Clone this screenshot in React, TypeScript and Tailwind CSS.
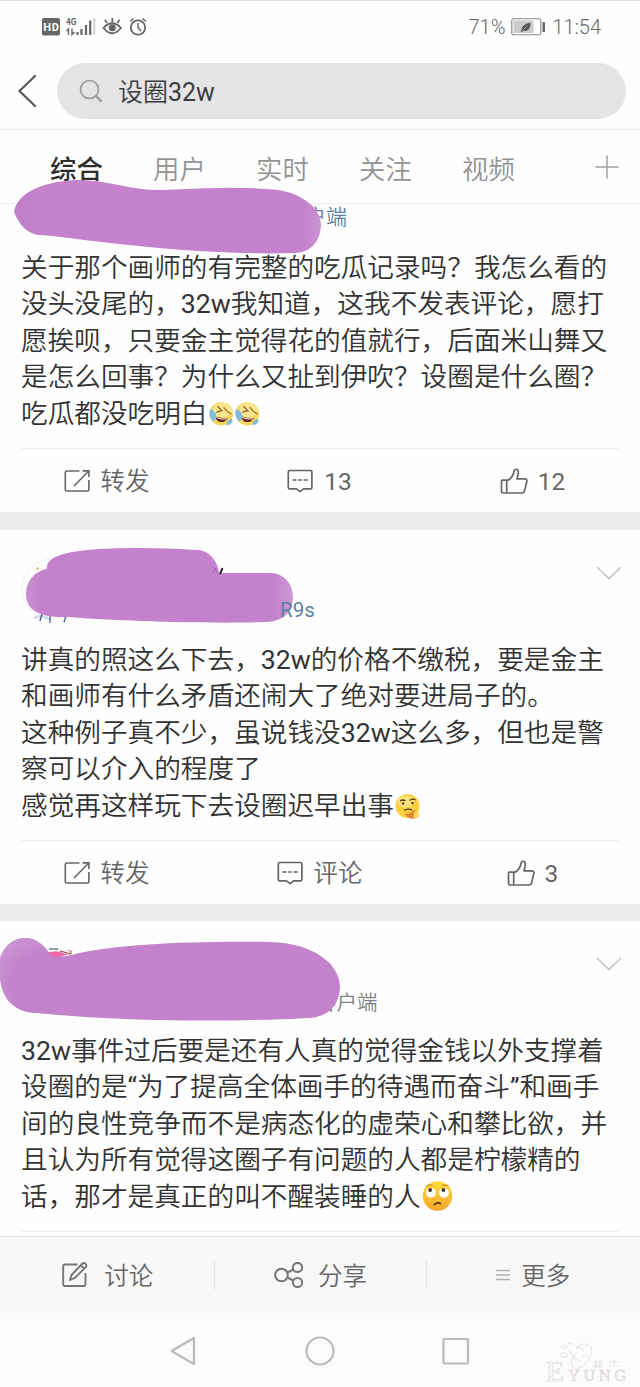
import type { ReactNode } from 'react'

interface Line {
  text: string
  emoji?: ReactNode
}

interface PostProps {
  header: ReactNode
  lines: Line[]
  children?: ReactNode
}

function BackIcon() {
  return (
    <svg className="h-[36px] w-[22px]" viewBox="0 0 22 36" fill="none" stroke="#5a5a5c" strokeWidth="2.2" strokeLinecap="round">
      <path d="M18 3 L2.5 18 L18 33" />
    </svg>
  )
}

function SearchIcon() {
  return (
    <svg className="h-6 w-6" viewBox="0 0 24 24" fill="none" stroke="#98989a" strokeWidth="1.6" strokeLinecap="round">
      <circle cx="10.5" cy="10.5" r="9" />
      <path d="M17 17 L22 22" strokeWidth="2.2" />
    </svg>
  )
}

function ForwardIcon() {
  return (
    <svg className="h-[24px] w-[26px]" viewBox="0 0 26 24" fill="none" stroke="#666" strokeWidth="1.6">
      <path d="M15.5 2 H2.7 Q1.3 2 1.3 3.4 V20.6 Q1.3 22 2.7 22 H23.5 Q24.9 22 24.9 20.6 V11" />
      <path d="M10 17 L24.5 2.3 M18.5 1.9 H24.9 V8" />
    </svg>
  )
}

function CommentIcon() {
  return (
    <svg className="h-[24px] w-[26px]" viewBox="0 0 26 24" fill="none" stroke="#666" strokeWidth="1.7" strokeLinejoin="round">
      <path d="M2.7 1.5 H23.5 Q24.9 1.5 24.9 2.9 V18.5 Q24.9 19.9 23.5 19.9 H16.5 L13 22.7 L9.5 19.9 H2.7 Q1.3 19.9 1.3 18.5 V2.9 Q1.3 1.5 2.7 1.5 Z" />
      <path d="M5.5 11 H9.5 M11.2 11 H14.8 M16.6 11 H20.7" />
    </svg>
  )
}

function LikeIcon() {
  return (
    <svg className="h-[28px] w-[28px]" viewBox="0 0 28 28" fill="none" stroke="#666" strokeWidth="1.7" strokeLinejoin="round">
      <path d="M2.3 13.2 H8 C11.5 11.5 13.3 8 14.2 4 C14.5 1.6 18 1.6 18.3 4.5 C18.5 7 17.6 9.5 17 11.8 H24.5 Q27.3 12 26.9 14.3 L24.5 24 Q24 26 22 26 H3 Q1.5 26 1.5 24.5 V14 Q1.5 13.2 2.3 13.2 Z" />
      <path d="M6.7 13.2 V26" />
    </svg>
  )
}

function ChevronDown() {
  return (
    <svg className="h-[16px] w-[26px]" viewBox="0 0 26 16" fill="none" stroke="#c6c6c6" strokeWidth="1.7">
      <path d="M1 2 L13 13.5 L25 2" />
    </svg>
  )
}

function LaughCryEmoji() {
  return (
    <svg className="h-[26px] w-[26.6px] shrink-0" viewBox="0 0 27 26">
      <ellipse cx="13.5" cy="12.8" rx="12" ry="11.8" fill="#f6d65b" />
      <ellipse cx="15" cy="9" rx="9.5" ry="7.5" fill="#fae68c" />
      <path d="M9.5 5 L14 9.5 L8.5 11" fill="none" stroke="#8b5a22" strokeWidth="1.3" />
      <path d="M16 6 Q19 11 24 13" fill="none" stroke="#a8742c" strokeWidth="1.3" />
      <path d="M7 15.5 Q14 17.5 20.5 17 Q16 23 10.5 20.5 Q7.5 18.5 7 15.5 Z" fill="#6e1d14" />
      <path d="M8 16 Q14 18 19.5 17.4 L18.5 18.5 Q13 19 8.5 17 Z" fill="#fff" />
      <path d="M2 8 Q9 10.5 8.5 16 Q7.5 21 4.5 20 Q0 15 2 8 Z" fill="#7dbde0" />
      <path d="M20 20 Q25 16 25 20 Q23.5 24.5 18.5 24 Z" fill="#7dbde0" />
    </svg>
  )
}

function ThinkingEmoji() {
  return (
    <svg className="h-[27px] w-[27px] shrink-0" viewBox="0 0 27 27">
      <circle cx="13.5" cy="13" r="12" fill="#f8cf3f" />
      <ellipse cx="12" cy="8.5" rx="8.5" ry="6" fill="#fbe27a" />
      <path d="M6 8 Q9 6 11.5 8 M15.5 7.5 Q18.5 5 21.5 7" fill="none" stroke="#5a3a14" strokeWidth="1.3" />
      <circle cx="9" cy="10.5" r="1.2" fill="#4d3212" />
      <circle cx="18.5" cy="10" r="1.2" fill="#4d3212" />
      <path d="M10 17.5 Q13.5 15 18 17" fill="none" stroke="#5a3a14" strokeWidth="1.4" />
      <path d="M11 20 Q15 22.5 20.5 16.5 Q22 18 19.5 20.5 Q25 18.5 25 22.5 Q23 26.5 17 25.5 Q12 24.5 11 20 Z" fill="#e5872a" />
      <path d="M20 20.5 Q25 18.5 25.5 22 Q24 26 19 25 Z" fill="#fbdc62" />
    </svg>
  )
}

function RollingEyesEmoji() {
  return (
    <svg className="ml-[1px] mt-[-3px] h-[30px] w-[31px] shrink-0" viewBox="0 0 31 30">
      <defs>
        <linearGradient id="face" x1="0" y1="0" x2="0" y2="1">
          <stop offset="0" stopColor="#fddc3a" />
          <stop offset="1" stopColor="#f4a72a" />
        </linearGradient>
      </defs>
      <circle cx="15.5" cy="15" r="14.7" fill="url(#face)" />
      <circle cx="9" cy="11.8" r="4.9" fill="#fff" />
      <circle cx="22" cy="11.8" r="4.9" fill="#fff" />
      <circle cx="8.2" cy="9" r="1.9" fill="#43322a" />
      <circle cx="21.4" cy="9" r="1.9" fill="#43322a" />
      <path d="M4 5.5 Q7 3 10.5 4 M20.5 4 Q24 3 27 5.5" fill="none" stroke="#c97d1b" strokeWidth="1" />
      <path d="M12.5 23.5 Q15 21 18.5 22.5" fill="none" stroke="#5f3514" strokeWidth="1.8" strokeLinecap="round" />
    </svg>
  )
}

function StatusBar() {
  return (
    <div className="flex h-[54px] items-center border-t border-[#e2e2e2] pb-[2px] pl-[42px] pr-[39px] text-[20px] font-[350] text-[#666]">
      <svg className="h-[20px] w-[106px]" viewBox="42 17 106 20" fill="none" stroke="#666" strokeWidth="1.8">
        <rect x="42" y="18" width="18" height="17.5" rx="2" fill="#666" stroke="none" />
        <text x="43.3" y="31" fontSize="11" fontWeight="700" fontFamily="Roboto" fill="#fff" stroke="none" textLength="15.5">HD</text>
        <text x="66" y="25" fontSize="9.5" fontWeight="700" fontFamily="Roboto" fill="#666" stroke="none" textLength="10.5" lengthAdjust="spacingAndGlyphs">4G</text>
        <path d="M68.5 35 V29 L66.5 31 M72 28.5 V34.5 L74.5 32" strokeWidth="1.4" />
        <path d="M77.5 32 V35 M81.5 29 V35 M86 25 V35 M90.2 20.5 V35" strokeWidth="2.2" />
        <path d="M94.3 18 V35" strokeWidth="2" stroke="#d4d4d4" />
        <path d="M103.5 28 Q112 18.5 121 28 Q112 38.5 103.5 28 Z" />
        <circle cx="112.3" cy="27.7" r="3.5" fill="#666" stroke="none" />
        <path d="M112.3 18 V22 M105 19.8 L107 23 M119.5 19.8 L117.5 23" />
        <circle cx="138" cy="27.5" r="7.2" />
        <path d="M138 23 V27.5 L141 31 M130 21.5 L133.5 18.5 M146 21.5 L142.5 18.5" strokeWidth="1.5" />
      </svg>
      <span className="ml-auto">71%</span>
      <svg className="ml-[6px] mr-[6px] h-[18px] w-[35px]" viewBox="0 0 35 18">
        <rect x="0.8" y="0.8" width="29" height="16" rx="1.8" fill="#fff" stroke="#888" strokeWidth="1.1" />
        <rect x="2.5" y="2.5" width="20" height="12.5" fill="#ccc" />
        <rect x="31.5" y="4" width="2.5" height="10" rx="0.8" fill="#666" />
        <path d="M10 14 Q10 6 19.5 4.5 Q20 13.5 12 13 L10.5 14.5 Z" fill="#555" />
        <path d="M11.5 12.5 L16.5 7.5" stroke="#ccc" strokeWidth="0.6" />
      </svg>
      <span>11:54</span>
    </div>
  )
}

function SearchHeader() {
  return (
    <div className="flex h-[76px] items-start border-b border-[#e8e8e8] pl-[17px] pt-[9px]">
      <div className="flex h-[56px] w-[40px] items-center">
        <BackIcon />
      </div>
      <div className="flex h-[56px] w-[569px] items-center rounded-full bg-[#e4e4e6] pl-[22px]">
        <SearchIcon />
        <span className="ml-[15px] pt-[3px] text-[25px] text-[#3c3c3e]">设圈32w</span>
      </div>
    </div>
  )
}

const tabs = ['综合', '用户', '实时', '关注', '视频']

function Tabs() {
  return (
    <div className="flex h-[74px] items-center border-b border-[#f0f0f0] pl-[50px] text-[26.4px] text-[#939393]">
      {tabs.map((tab, i) => (
        <span
          key={tab}
          className={
            i === 0
              ? "w-[103px] pt-[7px] font-[Roboto,'Noto_Sans_CJK_SC',sans-serif] font-medium leading-[40px] text-[#2e2e2e]"
              : 'w-[103px] pt-[7px] leading-[40px]'
          }
        >
          {tab}
        </span>
      ))}
      <svg className="ml-[29px] h-[26px] w-[26px]" viewBox="0 0 26 26" stroke="#a0a0a0" strokeWidth="1.5">
        <path d="M1.5 13 H24.5 M13 1.5 V24.5" />
      </svg>
    </div>
  )
}

function Post({ header, lines, children }: PostProps) {
  return (
    <article>
      {header}
      <div className="h-[199px] px-[21px]">
        <div className="h-full border-b border-[#ececec] text-[26.65px] text-[#333]">
          {lines.map((line) => (
            <p key={line.text} className="flex h-[36.4px] items-center whitespace-nowrap leading-[36.4px] last:pt-[1px]">
              {line.text}
              {line.emoji}
            </p>
          ))}
        </div>
      </div>
      {children}
    </article>
  )
}

function Actions({ comments, likes }: { comments: string; likes: string }) {
  return (
    <div className="flex h-[63px] items-center pr-[1px] text-[24.5px] text-[#666]">
      <div className="flex flex-1 items-center justify-center gap-[11px]">
        <ForwardIcon />
        <span className="pt-[3px]">转发</span>
      </div>
      <div className="flex flex-1 items-center justify-center gap-[11px]">
        <CommentIcon />
        <span className="pt-[3px]">{comments}</span>
      </div>
      <div className="flex flex-1 items-center justify-center gap-[10px]">
        <LikeIcon />
        <span className="pt-[3px]">{likes}</span>
      </div>
    </div>
  )
}

const firstLines: Line[] = [
  { text: '关于那个画师的有完整的吃瓜记录吗？我怎么看的' },
  { text: '没头没尾的，32w我知道，这我不发表评论，愿打' },
  { text: '愿挨呗，只要金主觉得花的值就行，后面米山舞又' },
  { text: '是怎么回事？为什么又扯到伊吹？设圈是什么圈？' },
  { text: '吃瓜都没吃明白', emoji: <><LaughCryEmoji /><LaughCryEmoji /></> },
]

const secondLines: Line[] = [
  { text: '讲真的照这么下去，32w的价格不缴税，要是金主' },
  { text: '和画师有什么矛盾还闹大了绝对要进局子的。' },
  { text: '这种例子真不少，虽说钱没32w这么多，但也是警' },
  { text: '察可以介入的程度了' },
  { text: '感觉再这样玩下去设圈迟早出事', emoji: <ThinkingEmoji /> },
]

const thirdLines: Line[] = [
  { text: '32w事件过后要是还有人真的觉得金钱以外支撑着' },
  { text: '设圈的是“为了提高全体画手的待遇而奋斗”和画手' },
  { text: '间的良性竞争而不是病态化的虚荣心和攀比欲，并' },
  { text: '且认为所有觉得这圈子有问题的人都是柠檬精的' },
  { text: '话，那才是真正的叫不醒装睡的人', emoji: <RollingEyesEmoji /> },
]

function FirstHeader() {
  return (
    <div className="relative h-[46px] pl-[305px] pt-[1px]">
      <span className="block text-[21px] leading-[24px] text-[#5c7fa3]">户端</span>
      <svg className="absolute left-0 top-[-30px] h-[80px] w-[340px]" viewBox="0 174 340 80">
        <defs>
          <linearGradient id="brush-a" x1="0" y1="0" x2="1" y2="0">
            <stop offset="0" stopColor="#bf80c8" />
            <stop offset="0.07" stopColor="#c382cb" />
            <stop offset="0.94" stopColor="#c382cb" />
            <stop offset="1" stopColor="#cc92d5" />
          </linearGradient>
        </defs>
        <path
          d="M14 212 C18 190 48 181 78 180 C108 180 133 191 163 190 C205 188 242 186 278 190 C300 193 321 207 321 225 C320 243 310 253 293 253 C232 255 163 249 110 243 C82 240 59 236 38 235 C27 233 20 226 14 212 Z"
          fill="url(#brush-a)"
        />
      </svg>
    </div>
  )
}

function SecondHeader() {
  return (
    <div className="relative flex h-[112px] justify-between pl-[280px] pr-[18px]">
      <span className="relative z-10 pt-[68px] text-[20.5px] leading-[24px] text-[#5c7fa3]">R9s</span>
      <div className="pt-[35px]">
        <ChevronDown />
      </div>
      <svg className="absolute left-0 top-0 h-[100px] w-[310px]" viewBox="0 530 310 100">
        <defs>
          <linearGradient id="brush-b" x1="0" y1="0" x2="1" y2="0">
            <stop offset="0" stopColor="#ca8dd2" />
            <stop offset="0.06" stopColor="#c382cb" />
            <stop offset="0.93" stopColor="#c382cb" />
            <stop offset="1" stopColor="#cf9ad7" />
          </linearGradient>
        </defs>
        <circle cx="52" cy="589" r="30" fill="#fff" stroke="#efeff4" />
        <circle cx="37.5" cy="568.5" r="1.2" fill="#e8a660" />
        <path d="M34 618 Q42 614 49 619" stroke="#d5d9ef" strokeWidth="3" fill="none" />
        <path d="M42 614 L40 621 M50 614 V623 M66 616 L64 622" stroke="#54628e" strokeWidth="1.4" />
        <path
          d="M47 569 C45 554 75 551 98 549 C132 547 168 548 198 550 C210 551 218 562 219 573 H270 C285 573 293 585 293 597 C293 613 282 622 265 622 C210 624 120 621 68 617 C42 618 26 612 26 594 C26 581 35 571 47 569 Z"
          fill="url(#brush-b)"
        />
        <path d="M222.5 568 L220 574" stroke="#2e2638" strokeWidth="2" />
        <path d="M213 573 L215 568 L217 573" stroke="#a167ae" fill="none" />
      </svg>
    </div>
  )
}

function ThirdHeader() {
  return (
    <div className="relative flex h-[112px] justify-between pl-[316px] pr-[18px]">
      <span className="pt-[70px] text-[20.5px] leading-[24px] text-[#808080]">客户端</span>
      <div className="pt-[35px]">
        <ChevronDown />
      </div>
      <svg className="absolute left-0 top-0 h-[106px] w-[345px]" viewBox="0 921 345 106">
        <defs>
          <radialGradient id="brush-c" gradientUnits="userSpaceOnUse" cx="42" cy="985" r="50">
            <stop offset="0.6" stopColor="#c382cb" />
            <stop offset="1" stopColor="#cb93d3" />
          </radialGradient>
        </defs>
        <path
          d="M0 958 C5 944 15 938 25 938 C35 938 43 944 49 953 C56 957 64 957 71 955 C116 944 190 941 270 942 C315 943 340 965 340 987 C339 1008 325 1018 307 1018 C240 1022 120 1022 38 1013 C14 1013 1 998 0 976 Z"
          fill="#c382cb"
        />
        <path d="M0 958 C5 944 15 938 25 938 C35 938 43 944 49 953 V1014 L38 1013 C14 1013 1 998 0 976 Z" fill="url(#brush-c)" />
        <path d="M48 952 L54 958 L70 954 L71 950 Z" fill="#ed6ba6" />
        <path d="M49 949 Q59 947 70 951 L70 955 L60 952 Z" fill="#f4efee" />
        <path d="M49 949 H58" stroke="#61858c" strokeWidth="1.5" />
        <path d="M60 951 L71 954 V951" stroke="#984c4e" strokeWidth="1" fill="none" />
      </svg>
    </div>
  )
}

function Toolbar() {
  return (
    <div className="flex h-[77px] items-center border-t border-[#e3e3e3] bg-[#f8f8f8] pr-[1px] text-[24.5px] text-[#666]">
      <div className="flex h-[30px] flex-1 items-center justify-center gap-[16px] border-r border-[#e3e3e3] pl-[2px]">
        <svg className="h-[26px] w-[26px]" viewBox="0 0 26 26" fill="none" stroke="#757575" strokeWidth="1.9" strokeLinejoin="round">
          <path d="M15.5 2.5 H2.5 Q1.2 2.5 1.2 4 V22.5 Q1.2 24 2.5 24 H22 Q23.5 24 23.5 22.5 V11" />
          <path d="M8 18 L9.5 13 L20.5 1.5 Q22 0.5 23.5 1.8 Q25 3.3 24 4.8 L13 15.8 Z M19 3.5 L22 6.5" />
        </svg>
        <span className="pt-[4px]">讨论</span>
      </div>
      <div className="flex h-[30px] flex-1 items-center justify-center gap-[14px] border-r border-[#e3e3e3]">
        <svg className="h-[26px] w-[30px]" viewBox="0 0 30 26" fill="none" stroke="#757575" strokeWidth="2">
          <circle cx="7.5" cy="13" r="6.3" />
          <circle cx="23.5" cy="5.5" r="4.6" />
          <circle cx="23.5" cy="20.5" r="4.6" />
          <path d="M13.5 10.5 L19.3 7.5 M13.5 15.5 L19.3 18.5" />
        </svg>
        <span className="pt-[4px]">分享</span>
      </div>
      <div className="flex h-[30px] flex-1 items-center justify-center gap-[11px]">
        <svg className="h-[14px] w-[14px]" viewBox="0 0 14 14" stroke="#b0b0b0" strokeWidth="1.3">
          <path d="M0 2.5 H14 M0 7 H14 M0 11.5 H14" />
        </svg>
        <span className="pt-[4px]">更多</span>
      </div>
    </div>
  )
}

function NavBar() {
  return (
    <div className="relative flex h-[74px] items-center justify-center bg-[#fcfcfc] pt-[2px]">
      <svg className="h-[32px] w-[300px]" viewBox="170 1335 300 32" fill="none" stroke="#bbb" strokeWidth="2.2" strokeLinejoin="round">
        <path d="M171.5 1351 L194 1338 V1364 Z" />
        <circle cx="320" cy="1351" r="13.5" />
        <rect x="443.5" y="1339" width="24.5" height="24.5" rx="1" />
      </svg>
      {/* signature in the corner */}
      <div className="absolute bottom-[1px] right-[8px]">
        <svg className="h-[46px] w-[88px]" viewBox="0 0 88 46" fill="none" stroke="#ddd6d6" strokeWidth="0.7">
          <path d="M33 12 Q24 20 29 28 Q38 30 42 22 Q50 16 47 7 Q40 0 32 8 Q36 6 40 12 M24 9 L31 18 M17 7 Q21 3 24 7 Q20 10 17 7 M24 4 Q28 1 30 5 M16 14 Q21 11 24 16 Q19 20 16 14 M37 17 Q42 13 45 18 M29 20 Q34 16 36 22" />
          <path d="M49 22 H59 M50 25 H58 M52 20 V27 M56 20 V27 M49 27 H59 M65 22 H75 M70 20 V28 M67 24 L65 27 M73 24 L75 27" />
          <text x="2" y="41" fontSize="30" fontFamily="Liberation Serif, serif">E</text>
          <text x="24" y="41" fontSize="16" fontFamily="Liberation Serif, serif" textLength="58">YUNG</text>
        </svg>
      </div>
    </div>
  )
}

export default function App() {
  return (
    <div className="flex h-[1387px] w-[640px] flex-col overflow-hidden bg-[#fefefe] font-[Roboto,'Noto_Sans_CJK_SC_DemiLight','Noto_Sans_CJK_SC',sans-serif] font-normal">
      <StatusBar />
      <SearchHeader />
      <Tabs />
      <main className="h-[1032px]">
        <Post header={<FirstHeader />} lines={firstLines}>
          <Actions comments="13" likes="12" />
        </Post>
        <div className="h-[18px] bg-[#ececec]" />
        <Post header={<SecondHeader />} lines={secondLines}>
          <Actions comments="评论" likes="3" />
        </Post>
        <div className="h-[17px] bg-[#ececec]" />
        <Post header={<ThirdHeader />} lines={thirdLines} />
      </main>
      <Toolbar />
      <NavBar />
    </div>
  )
}
